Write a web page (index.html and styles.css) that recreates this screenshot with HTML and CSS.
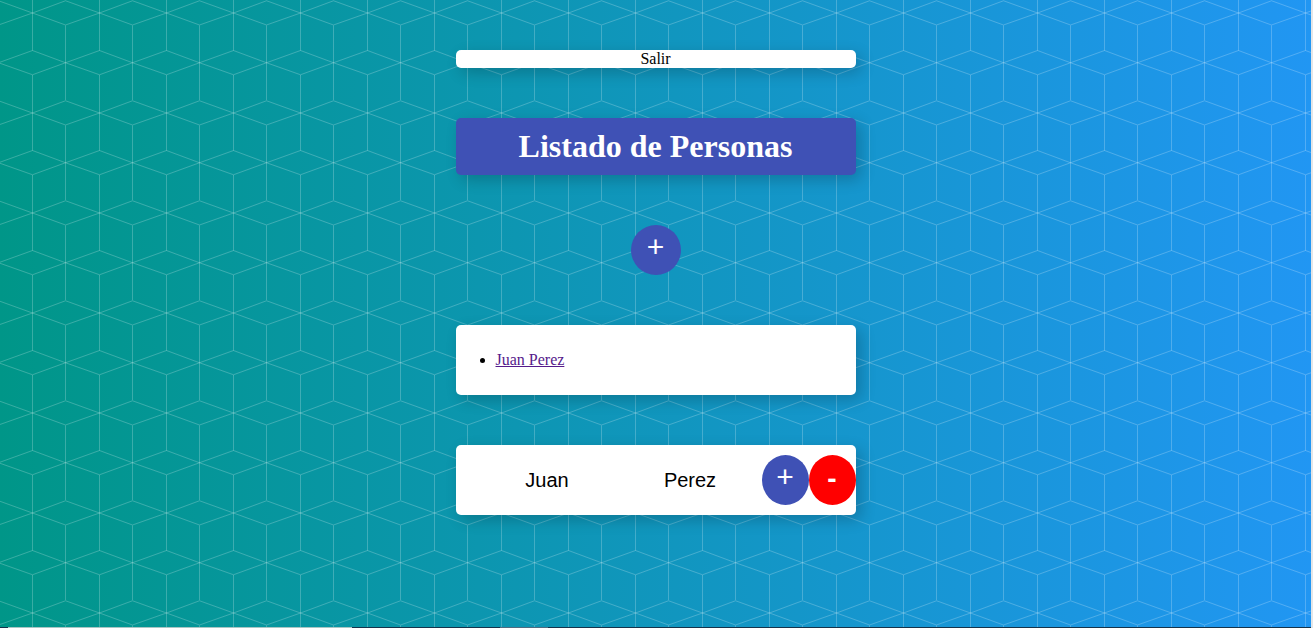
FILE: index.html
```html
<!DOCTYPE html>
<html lang="es">
<head>
<meta charset="utf-8">
<title>Listado de Personas</title>
<link rel="stylesheet" href="styles.css">
</head>
<body>
<main class="page">
  <a class="card logout" href="#salir">Salir</a>
  <h1 class="card title">Listado de Personas</h1>
  <button class="round add" type="button" aria-label="Agregar persona">+</button>
  <nav class="card">
    <ul class="people">
      <li><a class="person-link" href="#persona">Juan Perez</a></li>
    </ul>
  </nav>
  <form class="card person">
    <input class="field" type="text" value="Juan" aria-label="Nombre">
    <input class="field" type="text" value="Perez" aria-label="Apellido">
    <button class="round" type="button" aria-label="Guardar">+</button>
    <button class="round remove" type="button" aria-label="Eliminar">-</button>
  </form>
</main>
<div class="taskbar"><span class="search"></span><span class="task"></span></div>
</body>
</html>
```

FILE: styles.css
```css
* {
  box-sizing: border-box;
}

body {
  margin: 0;
  min-height: 100vh;
  display: flex;
  flex-direction: column;
  justify-content: space-between;
  font: 16px "Liberation Serif", "Times New Roman", serif;
  color: #000;
  border-right: 2px solid #e4e6e8;
  background:
    url("data:image/svg+xml,%3Csvg xmlns='http://www.w3.org/2000/svg' width='67' height='100'%3E%3Cg fill='none' stroke='%23fff' stroke-opacity='.22'%3E%3Cpath d='M32.5 0V50.500M32.5 75V100M65.500 25.500V100'/%3E%3Cpath d='M-1.500 62.750L32.500 50.500L65.500 62.750L32.500 74.750ZM32.500 13L65.500 .75L99.500 13L65.500 25ZM-34.500 13L-1.500 .75L32.500 13L-1.500 25ZM65.500 62.750L99.500 50.500M65.500 62.750L99.500 74.750'/%3E%3C/g%3E%3C/svg%3E"),
    linear-gradient(90deg, #009688, #2196f3);
}

.page {
  width: 400px;
  max-width: 100%;
  margin: 50px auto;
  display: flex;
  flex-direction: column;
  gap: 50px;
}

.card {
  margin: 0;
  border-radius: 5px;
  background: #fff;
  box-shadow: 5px 5px 15px rgba(0, 0, 0, .2);
}

.logout {
  color: #000;
  line-height: 18px;
  text-align: center;
  text-decoration: none;
}

.title {
  padding: 10px;
  background: #3f51b5;
  color: #fff;
  font-size: 32px;
  line-height: 37px;
  text-align: center;
}

.round {
  width: 47px;
  height: 50px;
  padding: 0 0 6px;
  border: 0;
  border-radius: 50%;
  background: #3f51b5;
  color: #fff;
  font: 30px "Liberation Sans", Arial, sans-serif;
}

.add {
  width: 50px;
  align-self: center;
}

.remove {
  padding: 0 0 2px;
  background: #f00;
  font-size: 28px;
  font-weight: bold;
}

.people {
  margin: 0;
  padding: 26px 0 26px 40px;
  line-height: 18px;
}

.person-link {
  color: #551a8b;
}

.person {
  display: flex;
  align-items: center;
  padding: 10px 0 10px 20px;
}

.field {
  flex: 1;
  min-width: 0;
  height: 50px;
  padding: 0;
  border: 0;
  background: none;
  color: #000;
  font: 20px "Liberation Sans", Arial, sans-serif;
  text-align: center;
}

.taskbar {
  display: flex;
  height: 1px;
  padding-left: 8px;
  background: #15324a;
}

.search {
  width: 344px;
  margin-right: 148px;
  background: #a9c6c4;
}

.task {
  width: 48px;
  background: #4f6b80;
}
```
